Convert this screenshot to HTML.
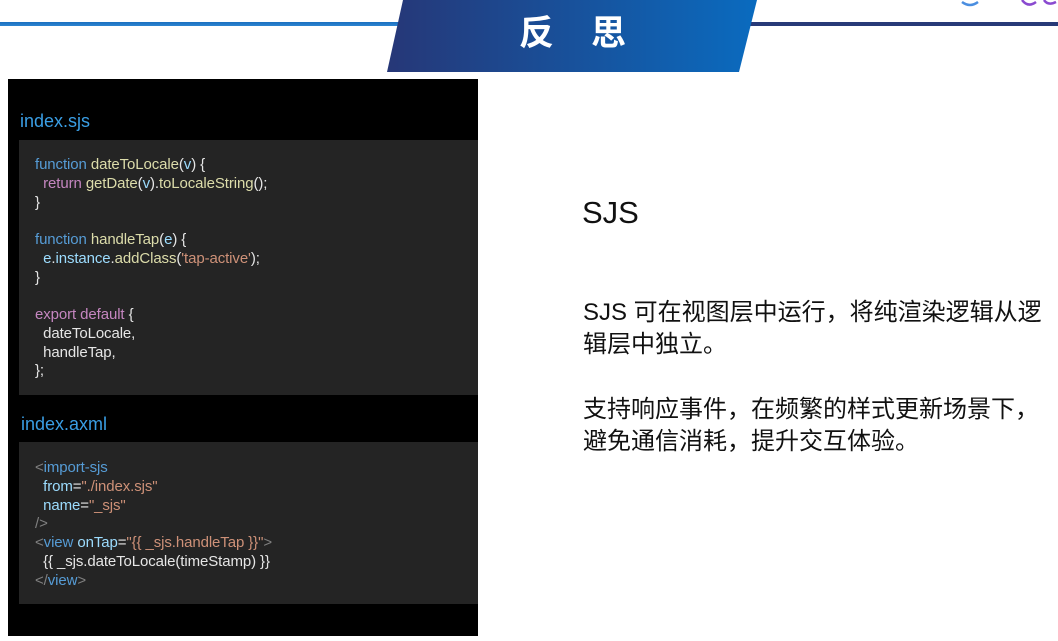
<!DOCTYPE html>
<html><head><meta charset="utf-8"><style>
*{margin:0;padding:0;box-sizing:border-box}
body{width:1058px;height:641px;background:#fff;position:relative;overflow:hidden;font-family:"Liberation Sans","Noto Sans CJK SC",sans-serif}
.abs{position:absolute}
.code{font-size:15px;line-height:18.75px;color:#e6e6e6;white-space:pre;font-family:"Liberation Sans",sans-serif;letter-spacing:-0.1px}
.k{color:#569cd6}.p{color:#c586c0}.s{color:#ce9178}.t{color:#dcdcaa}.v{color:#9cdcfe}.g{color:#808080}
.hdr{font-size:18px;color:#3a9ee4}
.r{font-size:24px;color:#111;white-space:nowrap;line-height:32px}
</style></head><body>
<div class="abs" style="left:0;top:22px;width:400px;height:4px;background:linear-gradient(#1a6fc0,#2d85d0)"></div>
<div class="abs" style="left:740px;top:22px;width:318px;height:4px;background:#283a78"></div>
<svg class="abs" style="left:0;top:0" width="1058" height="80">
<defs><linearGradient id="bg" x1="0" x2="1"><stop offset="0" stop-color="#263777"/><stop offset="1" stop-color="#0a6bbf"/></linearGradient></defs>
<polygon points="403,0 757,0 739,72 387,72" fill="url(#bg)"/>
<path d="M962 2 q8 6 16 0" stroke="#4a8ee0" stroke-width="2.5" fill="none"/>
<path d="M1022 0 q6 8 14 2 M1044 0 q4 6 12 2" stroke="#8a4ad0" stroke-width="2.5" fill="none"/>
</svg>
<div class="abs" style="left:519px;top:5px;font-size:35px;font-weight:bold;color:#fff;letter-spacing:37px;white-space:nowrap">反思</div>

<div class="abs" style="left:8px;top:79px;width:470px;height:557px;background:#000"></div>
<div class="abs hdr" style="left:20px;top:111px">index.sjs</div>
<div class="abs" style="left:19px;top:140px;width:459px;height:255px;background:#242424"></div>
<div class="abs code" style="left:35px;top:156px"><span class="k">function</span> <span class="t">dateToLocale</span>(<span class="v">v</span>) {
  <span class="p">return</span> <span class="t">getDate</span>(<span class="v">v</span>).<span class="t">toLocaleString</span>();
}

<span class="k">function</span> <span class="t">handleTap</span>(<span class="v">e</span>) {
  <span class="v">e</span>.<span class="v">instance</span>.<span class="t">addClass</span>(<span class="s">'tap-active'</span>);
}

<span class="p">export default</span> {
  dateToLocale,
  handleTap,
};</div>
<div class="abs hdr" style="left:21px;top:414px">index.axml</div>
<div class="abs" style="left:19px;top:442px;width:459px;height:162px;background:#242424"></div>
<div class="abs code" style="left:35px;top:459px"><span class="g">&lt;</span><span class="k">import-sjs</span>
  <span class="v">from</span>=<span class="s">"./index.sjs"</span>
  <span class="v">name</span>=<span class="s">"_sjs"</span>
<span class="g">/&gt;</span>
<span class="g">&lt;</span><span class="k">view</span> <span class="v">onTap</span>=<span class="s">"{{ _sjs.handleTap }}"</span><span class="g">&gt;</span>
  {{ _sjs.dateToLocale(timeStamp) }}
<span class="g">&lt;/</span><span class="k">view</span><span class="g">&gt;</span></div>

<div class="abs" style="left:582px;top:195px;font-size:31px;color:#111">SJS</div>
<div class="abs r" style="left:583px;top:297px">SJS 可在视图层中运行，将纯渲染逻辑从逻<br>辑层中独立。</div>
<div class="abs r" style="left:583px;top:394px">支持响应事件，在频繁的样式更新场景下，<br>避免通信消耗，提升交互体验。</div>
</body></html>
